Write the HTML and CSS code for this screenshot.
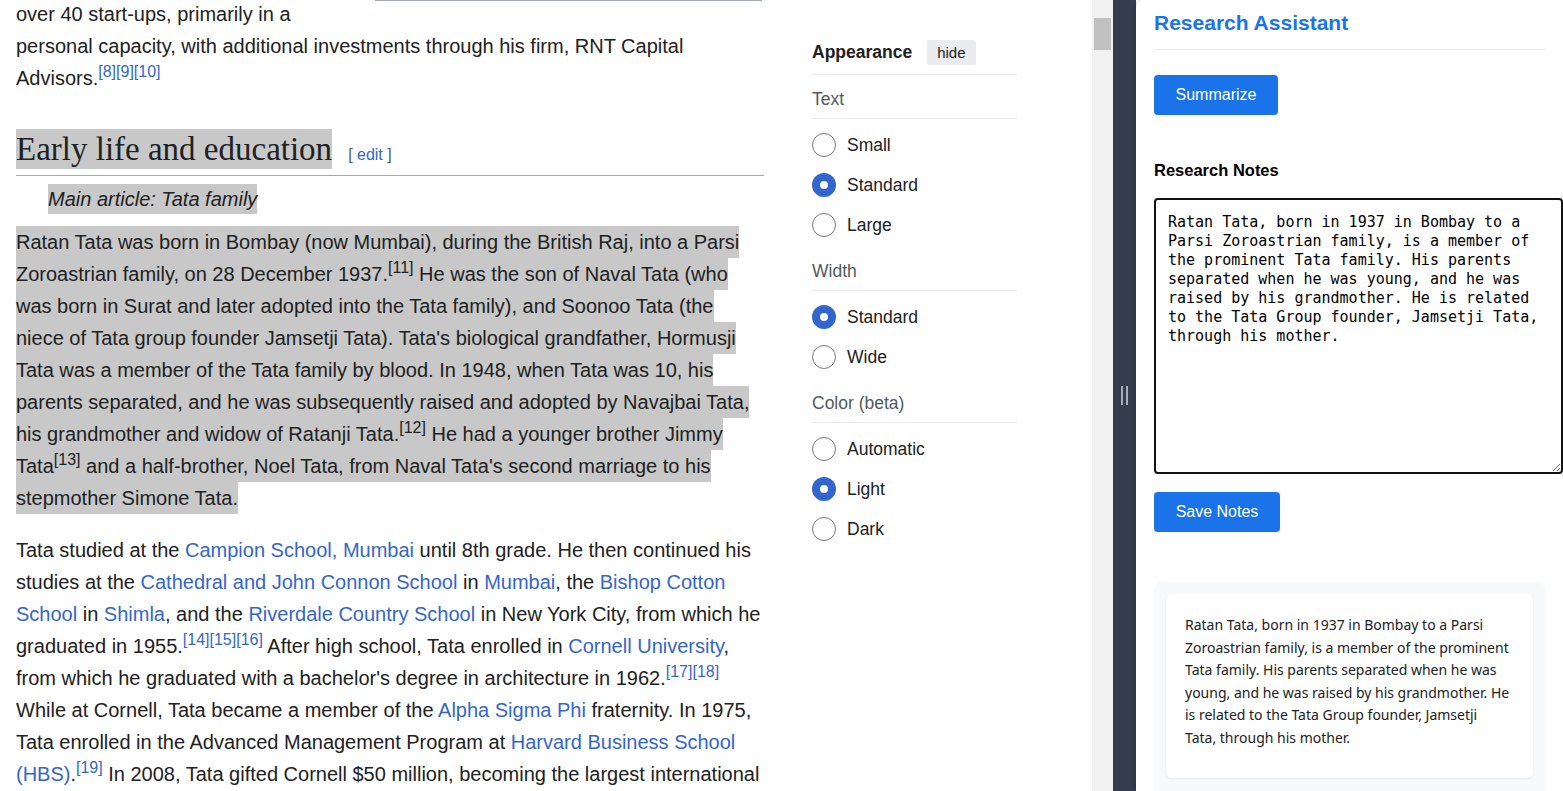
FILE: index.html
```html
<!DOCTYPE html>
<html lang="en">
<head>
<meta charset="utf-8">
<title>Ratan Tata - Research Assistant</title>
<link rel="stylesheet" href="styles.css">
</head>
<body>
<div class="app">
  <main class="wiki">
    <article class="content">
      <p class="p-first"><span class="infobox-end"></span>over 40 start-ups, primarily in a personal capacity, with additional investments through his firm, RNT Capital Advisors.<sup class="ref"><a href="#">[8]</a><a href="#">[9]</a><a href="#">[10]</a></sup></p>

      <h2 class="section-heading"><span class="hl hl-h">Early life and education</span><span class="editsection">[ <a href="#">edit</a> ]</span></h2>
      <div class="hatnote"><span class="hl hl-note">Main article: Tata family</span></div>

      <p><span class="hl hl-p">Ratan Tata was born in Bombay (now Mumbai), during the British Raj, into a Parsi Zoroastrian family, on 28 December 1937.<sup class="ref"><a href="#">[11]</a></sup> He was the son of Naval Tata (who was born in Surat and later adopted into the Tata family), and Soonoo Tata (the niece of Tata group founder Jamsetji Tata). Tata's biological grandfather, Hormusji Tata was a member of the Tata family by blood. In 1948, when Tata was 10, his parents separated, and he was subsequently raised and adopted by Navajbai Tata, his grandmother and widow of Ratanji Tata.<sup class="ref"><a href="#">[12]</a></sup> He had a younger brother Jimmy Tata<sup class="ref"><a href="#">[13]</a></sup> and a half-brother, Noel Tata, from Naval Tata's second marriage to his stepmother Simone Tata.</span></p>

      <p>Tata studied at the <a href="#">Campion School, Mumbai</a> until 8th grade. He then continued his studies at the <a href="#">Cathedral and John Connon School</a> in <a href="#">Mumbai</a>, the <a href="#">Bishop Cotton School</a> in <a href="#">Shimla</a>, and the <a href="#">Riverdale Country School</a> in New York City, from which he graduated in 1955.<sup class="ref"><a href="#">[14]</a><a href="#">[15]</a><a href="#">[16]</a></sup> After high school, Tata enrolled in <a href="#">Cornell University</a>, from which he graduated with a bachelor's degree in architecture in 1962.<sup class="ref"><a href="#">[17]</a><a href="#">[18]</a></sup> While at Cornell, Tata became a member of the <a href="#">Alpha Sigma Phi</a> fraternity. In 1975, Tata enrolled in the Advanced Management Program at <a href="#">Harvard Business School</a> <a href="#">(HBS)</a>.<sup class="ref"><a href="#">[19]</a></sup> In 2008, Tata gifted Cornell $50 million, becoming the largest international donor in the university's history.</p>
    </article>

    <aside class="appearance">
      <div class="app-head">
        <span class="app-title">Appearance</span>
        <button class="hide-btn" type="button">hide</button>
      </div>

      <div class="sec-label sec-first">Text</div>
      <div class="radio-row"><span class="radio"></span><span class="radio-label">Small</span></div>
      <div class="radio-row"><span class="radio checked"></span><span class="radio-label">Standard</span></div>
      <div class="radio-row"><span class="radio"></span><span class="radio-label">Large</span></div>

      <div class="sec-label">Width</div>
      <div class="radio-row"><span class="radio checked"></span><span class="radio-label">Standard</span></div>
      <div class="radio-row"><span class="radio"></span><span class="radio-label">Wide</span></div>

      <div class="sec-label">Color (beta)</div>
      <div class="radio-row"><span class="radio"></span><span class="radio-label">Automatic</span></div>
      <div class="radio-row"><span class="radio checked"></span><span class="radio-label">Light</span></div>
      <div class="radio-row"><span class="radio"></span><span class="radio-label">Dark</span></div>
    </aside>
  </main>

  <div class="scrollbar"><div class="thumb"></div></div>

  <div class="divider"><span class="grip"><i></i><i></i></span></div>

  <section class="panel">
    <h1 class="panel-title">Research Assistant</h1>
    <button class="btn btn-summarize" type="button">Summarize</button>
    <h3 class="notes-title">Research Notes</h3>
    <textarea class="notes" spellcheck="false">Ratan Tata, born in 1937 in Bombay to a Parsi Zoroastrian family, is a member of the prominent Tata family. His parents separated when he was young, and he was raised by his grandmother. He is related to the Tata Group founder, Jamsetji Tata, through his mother.</textarea>
    <button class="btn btn-save" type="button">Save Notes</button>
    <div class="saved-wrap">
      <div class="saved-card">
        <p>Ratan Tata, born in 1937 in Bombay to a Parsi Zoroastrian family, is a member of the prominent Tata family. His parents separated when he was young, and he was raised by his grandmother. He is related to the Tata Group founder, Jamsetji Tata, through his mother.</p>
      </div>
    </div>
  </section>
</div>
</body>
</html>
```

FILE: styles.css
```css
* { box-sizing: border-box; }

html, body {
  margin: 0;
  padding: 0;
  height: 100%;
  overflow: hidden;
  background: #ffffff;
}

body {
  font-family: "Liberation Sans", Arial, sans-serif;
  color: #202122;
}

.app {
  display: flex;
  width: 1563px;
  height: 791px;
}

/* ---------- Wikipedia area ---------- */
.wiki {
  width: 1092px;
  flex: none;
  display: flex;
  gap: 48px;
  padding-left: 16px;
  overflow: hidden;
  background: #fff;
}

.content {
  width: 748px;
  flex: none;
  margin-top: -2px;
  font-size: 20px;
  line-height: 32px;
  color: #202122;
}

.content p {
  margin: 0 0 20px;
}

.content a {
  color: #3366cc;
  text-decoration: none;
}

.infobox-end {
  float: right;
  width: 387px;
  height: 3px;
  margin: 0 2px 0 20px;
  border-bottom: 1px solid #a2a9b1;
}

sup.ref {
  font-size: 16px;
  line-height: 1;
  vertical-align: super;
}

.hl {
  background: #c8c8c8;
}

.hl-p {
  padding: 5px 0;
}

.hl-p sup.ref a {
  color: #202122;
}

.section-heading {
  margin: 35px 0 0;
  padding-bottom: 6px;
  border-bottom: 1px solid #a2a9b1;
  font-family: "Liberation Serif", "Times New Roman", serif;
  font-weight: normal;
  font-size: 33px;
  line-height: 40px;
  color: #202122;
}

.hl-h {
  padding: 2px 0;
}

.editsection {
  margin-left: 16px;
  font-family: "Liberation Sans", Arial, sans-serif;
  font-size: 16px;
  line-height: 1;
  color: #54595d;
}

.hatnote {
  margin: 8px 0 11px;
  padding-left: 32px;
  font-style: italic;
  font-size: 20px;
  line-height: 31px;
}

.hl-note {
  padding: 4px 0;
}

/* ---------- Appearance side menu ---------- */
.appearance {
  width: 205px;
  flex: none;
  padding-top: 40px;
  font-size: 17.5px;
}

.app-head {
  display: flex;
  align-items: center;
  gap: 15px;
  height: 25px;
  padding-bottom: 9px;
  box-sizing: content-box;
  border-bottom: 1px solid #eaecf0;
}

.app-title {
  font-weight: bold;
  color: #202122;
}

.hide-btn {
  height: 25px;
  padding: 0 10px;
  border: none;
  border-radius: 2px;
  background: #eaecf0;
  color: #202122;
  font-family: "Liberation Sans", Arial, sans-serif;
  font-size: 15px;
}

.sec-label {
  padding: 14px 0 7px;
  line-height: 24px;
  color: #54595d;
  border-bottom: 1px solid #eaecf0;
  margin-bottom: 6px;
}

.sec-label.sec-first {
  padding-top: 12px;
}

.radio-row {
  display: flex;
  align-items: center;
  gap: 11px;
  height: 40px;
}

.radio {
  width: 24px;
  height: 24px;
  flex: none;
  border-radius: 50%;
  border: 1px solid #72777d;
  background: #fff;
}

.radio.checked {
  border: 8px solid #3366cc;
}

.radio-label {
  color: #202122;
}

/* ---------- Scrollbar & divider ---------- */
.scrollbar {
  width: 21px;
  flex: none;
  background: #f1f1f1;
  padding: 18px 2px 0;
}

.thumb {
  height: 32px;
  background: #c1c1c1;
}

.divider {
  width: 23px;
  flex: none;
  background: #343d4d;
  display: flex;
  align-items: center;
  justify-content: center;
}

.grip {
  display: flex;
  gap: 3px;
  margin-top: -1px;
}

.grip i {
  display: block;
  width: 2px;
  height: 19px;
  background: #a6aebb;
}

/* ---------- Research panel ---------- */
.panel {
  width: 427px;
  flex: none;
  padding: 9px 18px 0;
  background: #fff;
  border-top-left-radius: 8px;
  box-shadow: -2px 0 4px rgba(0, 0, 0, 0.12);
  font-family: "Liberation Sans", Arial, sans-serif;
}

.panel-title {
  margin: 0;
  padding-bottom: 12px;
  border-bottom: 1px solid #e8eaed;
  font-size: 21px;
  line-height: 28px;
  font-weight: bold;
  color: #1a73e8;
}

.btn {
  display: block;
  height: 40px;
  padding: 0 20px;
  border: none;
  border-radius: 4px;
  background: #1a73e8;
  color: #fff;
  font-family: "Liberation Sans", Arial, sans-serif;
  font-size: 16px;
}

.btn-summarize {
  margin-top: 25px;
  width: 124px;
}

.notes-title {
  margin: 44px 0 0;
  font-size: 16.5px;
  line-height: 22px;
  font-weight: bold;
  color: #000;
}

.notes {
  display: block;
  margin-top: 17px;
  width: 409px;
  height: 276px;
  padding: 13px 12px 12px;
  border: 2px solid #111;
  border-radius: 4px;
  font-family: "DejaVu Sans Mono", "Liberation Mono", monospace;
  font-size: 15px;
  line-height: 19px;
  color: #000;
  background: #fff;
  resize: both;
}

.btn-save {
  margin-top: 18px;
  width: 126px;
}

.saved-wrap {
  margin-top: 50px;
  padding: 12px;
  background: #f8f9fa;
  border-radius: 8px;
  height: 260px;
}

.saved-card {
  background: #fff;
  border-radius: 6px;
  padding: 20px 22px 29px 19px;
  box-shadow: 0 1px 3px rgba(0, 0, 0, 0.08);
}

.saved-card p {
  margin: 0;
  font-family: "Noto Sans", "Open Sans", sans-serif;
  font-size: 14px;
  line-height: 22.5px;
  color: #202124;
}
```
